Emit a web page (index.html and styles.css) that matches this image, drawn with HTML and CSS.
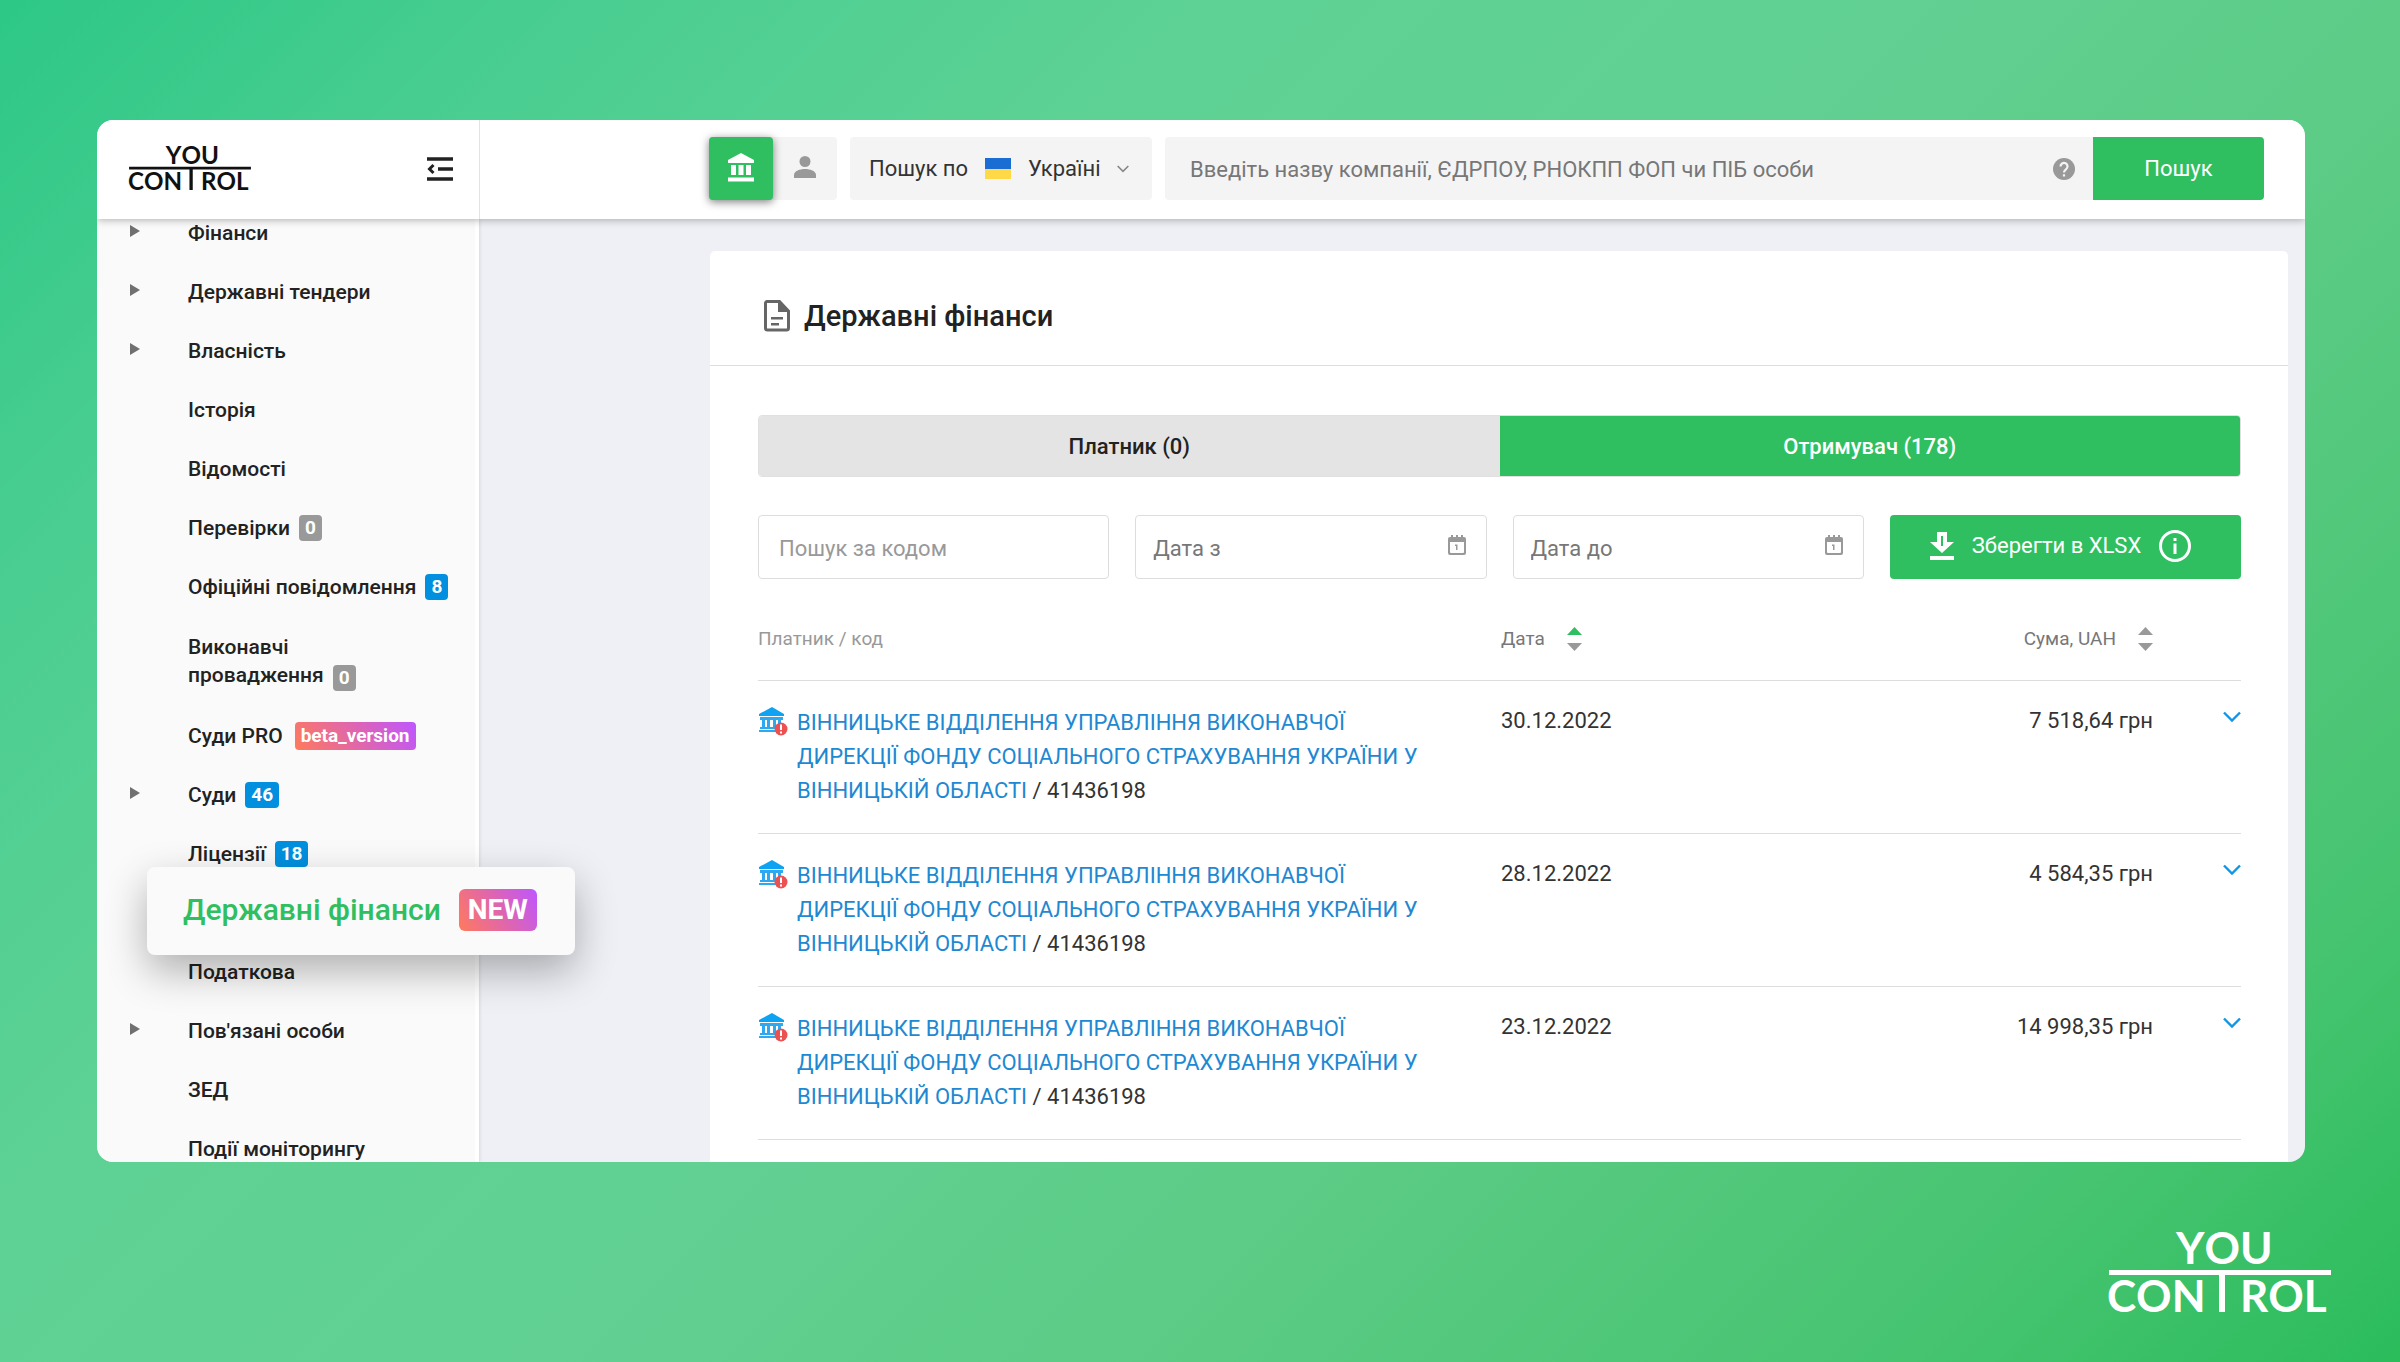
FILE: index.html
```html
<!DOCTYPE html>
<html lang="uk">
<head>
<meta charset="utf-8">
<title>Державні фінанси</title>
<link rel="stylesheet" href="styles.css">
</head>
<body>
<svg class="defs" aria-hidden="true">
  <symbol id="logo" viewBox="0 0 222 82" overflow="visible">
    <g class="logo-text" fill="currentColor">
      <text x="67" y="32">YOU</text>
      <text x="-2" y="80">CON</text>
      <text x="131" y="80">ROL</text>
    </g>
    <path d="M0 38h222v5H116v37h-6V43H0z" fill="currentColor"/>
  </symbol>
  <symbol id="calendar" viewBox="0 0 20 20">
    <path d="M3 2h1V0h2v2h3V0h2v2h3V0h2v2h1q2 0 2 2v14q0 2-2 2H3q-2 0-2-2V4q0-2 2-2zM3 7v10q0 1 1 1h12q1 0 1-1V7z" fill="currentColor" fill-rule="evenodd"/>
    <path d="M8 9.500h2.500V15H9v-4H8z" fill="currentColor"/>
  </symbol>
  <symbol id="bank-alert" viewBox="0 0 30 30">
    <path d="M14 1 26 8v2H1V8z" fill="#0ea2f2"/>
    <path d="M2 11h23v3H2zM4 14h3v7H4zM9 14h3v7H9zM15 14h3v7h-3zM20 14h3v7h-3zM2 21h18v2H2zM1 24h18v2H1z" fill="#2ea8ee"/>
    <circle cx="23" cy="23" r="6.500" fill="#ec5151"/>
    <path d="M22 18.500h2v5.500h-2zM22 25.500h2v2h-2z" fill="#fff"/>
  </symbol>
  <symbol id="chevron" viewBox="0 0 18 12">
    <path d="M1 1.500l8 8 8-8" fill="none" stroke="currentColor" stroke-width="2.400"/>
  </symbol>
</svg>

<div class="window">
  <header class="topbar">
    <div class="brand">
      <a class="brand-link" href="#" aria-label="YouControl"><svg class="brand-logo"><use href="#logo"/></svg></a>
      <button class="collapse" aria-label="Згорнути меню">
        <svg viewBox="0 0 26 24" width="26" height="24"><path d="M0 2h26M11 12h15M0 22h26" stroke="#222" stroke-width="3.500"/><path d="M6.500 8l-4 4 4 4" fill="none" stroke="#222" stroke-width="3"/></svg>
      </button>
    </div>
    <form class="search">
      <div class="kind">
        <button type="button" class="kind-btn active" aria-label="Компанії">
          <svg viewBox="0 0 26 30" width="26" height="30"><path d="M13 1 26 8v3H0V8zM3 13h5v10H3zM10.500 13h5v10h-5zM18 13h5v10h-5zM0 25.500h26v4H0z" fill="#fff"/></svg>
        </button>
        <button type="button" class="kind-btn" aria-label="Особи">
          <svg viewBox="0 0 22 22" width="22" height="22"><circle cx="11" cy="5.500" r="5.500" fill="#999"/><path d="M0 22v-3c0-4 6-6 11-6s11 2 11 6v3z" fill="#999"/></svg>
        </button>
      </div>
      <button type="button" class="region">
        <span>Пошук по</span>
        <svg viewBox="0 0 26 21" width="26" height="21"><path d="M0 0h26v11H0z" fill="#1a6dd3"/><path d="M0 11h26v10H0z" fill="#ffd948"/></svg>
        <span>Україні</span>
        <svg class="region-arrow"><use href="#chevron"/></svg>
      </button>
      <div class="query">
        <input class="query-input" type="text" aria-label="Пошук" placeholder="Введіть назву компанії, ЄДРПОУ, РНОКПП ФОП чи ПІБ особи">
        <span class="help"><svg viewBox="0 0 22 22" width="22" height="22"><circle cx="11" cy="11" r="11" fill="#999"/><path d="M7.500 8.500a3.500 3.500 0 1 1 5.500 2.800c-1.300 1-2 1.500-2 3.200" fill="none" stroke="#f4f4f4" stroke-width="2.200"/><path d="M9.900 16.300h2.200v2.200H9.900z" fill="#f4f4f4"/></svg></span>
        <button class="query-btn" type="button">Пошук</button>
      </div>
    </form>
  </header>

  <div class="body">
    <nav class="sidebar">
      <ul class="menu">
        <li class="item has-sub"><a href="#">Фінанси</a></li>
        <li class="item has-sub"><a href="#">Державні тендери</a></li>
        <li class="item has-sub"><a href="#">Власність</a></li>
        <li class="item"><a href="#">Історія</a></li>
        <li class="item"><a href="#">Відомості</a></li>
        <li class="item"><a href="#">Перевірки</a><span class="badge">0</span></li>
        <li class="item"><a href="#">Офіційні повідомлення</a><span class="badge blue">8</span></li>
        <li class="item two-line"><a href="#">Виконавчі<br>провадження</a><span class="badge">0</span></li>
        <li class="item"><a href="#">Суди PRO</a><span class="badge beta">beta_version</span></li>
        <li class="item has-sub"><a href="#">Суди</a><span class="badge blue">46</span></li>
        <li class="item"><a href="#">Ліцензії</a><span class="badge blue">18</span></li>
        <li class="item current"><a class="callout" href="#"><span>Державні фінанси</span><span class="new">NEW</span></a></li>
        <li class="item"><a href="#">Податкова</a></li>
        <li class="item has-sub"><a href="#">Пов'язані особи</a></li>
        <li class="item"><a href="#">ЗЕД</a></li>
        <li class="item"><a href="#">Події моніторингу</a></li>
      </ul>
    </nav>

    <main class="content">
      <section class="panel">
        <h1 class="panel-title">
          <svg viewBox="0 0 26 32" width="26" height="32"><path d="M3 1.500h12.500L24.500 11v17a2 2 0 0 1-2 2H3.500a2 2 0 0 1-2-2V3a1.500 1.500 0 0 1 1.500-1.500z" fill="none" stroke="#666" stroke-width="3"/><path d="M14 1h2l9 10v1H14zM7 17h12v2.500H7zM7 23h8v2.500H7z" fill="#666"/></svg>
          Державні фінанси
        </h1>
        <div class="panel-body">
          <div class="tabs">
            <button class="tab">Платник (0)</button>
            <button class="tab active">Отримувач (178)</button>
          </div>
          <div class="filters">
            <input class="field code" type="text" aria-label="Пошук за кодом" placeholder="Пошук за кодом">
            <div class="date"><input class="field" type="text" aria-label="Дата з" placeholder="Дата з"><svg class="cal"><use href="#calendar"/></svg></div>
            <div class="date"><input class="field" type="text" aria-label="Дата до" placeholder="Дата до"><svg class="cal"><use href="#calendar"/></svg></div>
            <button class="export">
              <svg viewBox="0 0 24 28" width="24" height="28"><path d="M7 0h10v10h7L12 21 0 10h7zM0 24h24v4H0z" fill="#fff"/><path d="M11 4h2v10h-2z" fill="#2fbf61"/></svg>
              <span>Зберегти в XLSX</span>
              <svg viewBox="0 0 32 32" width="32" height="32"><circle cx="16" cy="16" r="14.500" fill="none" stroke="#fff" stroke-width="3"/><path d="M14.500 8h3v3h-3zM14.500 13.500h3V24h-3z" fill="#fff"/></svg>
            </button>
          </div>
          <table class="payments">
            <colgroup><col class="c-payer"><col class="c-date"><col class="c-sum"><col class="c-more"></colgroup>
            <thead>
              <tr>
                <th class="payer-head">Платник / код</th>
                <th><span class="sort">Дата <svg viewBox="0 0 15 24" width="15" height="24"><path d="M7.500 0 15 8H0z" fill="#2fbf61"/><path d="M7.500 24 15 16H0z" fill="#999"/></svg></span></th>
                <th class="sum"><span class="sort">Сума, UAH <svg viewBox="0 0 15 24" width="15" height="24"><path d="M7.500 0 15 8H0z" fill="#999"/><path d="M7.500 24 15 16H0z" fill="#999"/></svg></span></th>
                <th></th>
              </tr>
            </thead>
            <tbody>
              <tr>
                <td><div class="payer"><svg class="payer-icon"><use href="#bank-alert"/></svg><p><a href="#">ВІННИЦЬКЕ ВІДДІЛЕННЯ УПРАВЛІННЯ ВИКОНАВЧОЇ ДИРЕКЦІЇ ФОНДУ СОЦІАЛЬНОГО СТРАХУВАННЯ УКРАЇНИ У ВІННИЦЬКІЙ ОБЛАСТІ</a> / 41436198</p></div></td>
                <td>30.12.2022</td>
                <td class="sum">7 518,64 грн</td>
                <td class="more"><button class="expand" aria-label="Детальніше"><svg class="arrow"><use href="#chevron"/></svg></button></td>
              </tr>
              <tr>
                <td><div class="payer"><svg class="payer-icon"><use href="#bank-alert"/></svg><p><a href="#">ВІННИЦЬКЕ ВІДДІЛЕННЯ УПРАВЛІННЯ ВИКОНАВЧОЇ ДИРЕКЦІЇ ФОНДУ СОЦІАЛЬНОГО СТРАХУВАННЯ УКРАЇНИ У ВІННИЦЬКІЙ ОБЛАСТІ</a> / 41436198</p></div></td>
                <td>28.12.2022</td>
                <td class="sum">4 584,35 грн</td>
                <td class="more"><button class="expand" aria-label="Детальніше"><svg class="arrow"><use href="#chevron"/></svg></button></td>
              </tr>
              <tr>
                <td><div class="payer"><svg class="payer-icon"><use href="#bank-alert"/></svg><p><a href="#">ВІННИЦЬКЕ ВІДДІЛЕННЯ УПРАВЛІННЯ ВИКОНАВЧОЇ ДИРЕКЦІЇ ФОНДУ СОЦІАЛЬНОГО СТРАХУВАННЯ УКРАЇНИ У ВІННИЦЬКІЙ ОБЛАСТІ</a> / 41436198</p></div></td>
                <td>23.12.2022</td>
                <td class="sum">14 998,35 грн</td>
                <td class="more"><button class="expand" aria-label="Детальніше"><svg class="arrow"><use href="#chevron"/></svg></button></td>
              </tr>
            </tbody>
          </table>
        </div>
      </section>
    </main>
  </div>
</div>
<footer class="page-foot"><svg class="foot-logo" role="img" aria-label="YouControl"><use href="#logo"/></svg></footer>
</body>
</html>
```
FILE: styles.css
```css
*, ::before { box-sizing: border-box; }

body {
  margin: 0;
  height: 100vh;
  padding: 120px 95px 0 97px;
  display: flex;
  flex-direction: column;
  overflow: hidden;
  font: 400 22px/34px Roboto, sans-serif;
  color: #333;
  background: linear-gradient(135deg, #2dc886 0%, #4bce91 16%, #5dd294 32%, #62d093 50%, #5bcb84 68%, #46c470 87%, #2bbc5c 100%);
}

button, input { font: inherit; color: inherit; border: 0; margin: 0; }
button { padding: 0; background: none; cursor: pointer; }
a { color: inherit; text-decoration: none; }
svg { display: block; flex: none; }
.defs { position: absolute; width: 0; height: 0; }
.logo-text { font: 700 44px Lato, sans-serif; font-kerning: none; }
.brand-logo, .foot-logo { overflow: visible; }

.window {
  flex: 1;
  min-height: 0;
  display: flex;
  flex-direction: column;
  overflow: hidden;
  border-radius: 16px;
  background: #eff0f6;
}

/* top bar */
.topbar {
  position: relative;
  z-index: 1;
  flex: none;
  height: 99px;
  display: flex;
  background: #fff;
  box-shadow: 0 1px 8px rgba(0, 0, 0, .3);
}
.brand {
  flex: none;
  width: 383px;
  display: flex;
  align-items: center;
  justify-content: space-between;
  padding: 0 26px 2px 32px;
  border-right: 1px solid #e4e4e4;
}
.brand-link { color: #111; }
.brand-logo { width: 122px; height: 45px; }
.search {
  flex: 1;
  display: flex;
  gap: 13px;
  padding: 17px 41px 19px 229px;
}
.kind { flex: none; display: flex; border-radius: 4px; background: #f4f4f4; }
.kind-btn {
  width: 64px;
  display: grid;
  place-items: center;
  padding-bottom: 4px;
  border-radius: 4px;
}
.kind-btn.active { background: #2fbf61; box-shadow: 0 2px 8px rgba(0, 0, 0, .5); }
.region {
  flex: none;
  width: 302px;
  display: flex;
  align-items: center;
  padding: 0 22px 0 19px;
  gap: 17px;
  border-radius: 4px;
  background: #f4f4f4;
  white-space: nowrap;
}
.region-arrow { width: 12px; height: 8px; color: #888; }
.query {
  flex: 1;
  display: flex;
  align-items: center;
  overflow: hidden;
  border-radius: 4px;
  background: #f4f4f4;
}
.query-input { flex: 1; height: 100%; padding: 2px 25px 0; background: none; }
.query-input::placeholder { color: #777; opacity: 1; }
.help { margin-right: 18px; }
.query-btn { width: 171px; height: 100%; background: #2fbf61; color: #fff; }

.body { flex: 1; min-height: 0; display: flex; }

/* side menu */
.sidebar {
  flex: none;
  width: 382px;
  background: #fafafa;
  border-right: 4px solid #fff;
  box-shadow: 0 0 4px rgba(0, 0, 0, .15);
}
.menu { list-style: none; margin: 0; padding: 0; }
.item {
  display: flex;
  align-items: center;
  height: 59px;
  padding-left: 91px;
  font-weight: 500;
  font-size: 21px;
  line-height: 28px;
  color: #222;
}
.item:first-child { height: 43px; padding-bottom: 16px; }
.has-sub { padding-left: 33px; }
.has-sub::before {
  content: "";
  width: 10px;
  margin: 0 48px 4px 0;
  border: solid transparent;
  border-width: 6px 0 6px 10px;
  border-left-color: #707070;
}
.two-line { height: 90px; }
.two-line .badge { align-self: flex-end; margin-bottom: 15px; }
.badge {
  margin-left: 9px;
  padding: 0 6px;
  border-radius: 4px;
  background: #999;
  color: #fff;
  font-weight: 700;
  font-size: 19px;
  line-height: 26px;
}
.badge.blue { background: #0090df; }
.badge.beta {
  margin-left: 12px;
  line-height: 28px;
  background: linear-gradient(60deg, #ff7a5c, #e066ac 50%, #be56ff);
}
.current { position: relative; padding: 0; }
.callout {
  position: absolute;
  left: 50px;
  top: -16px;
  z-index: 2;
  width: 428px;
  height: 88px;
  display: flex;
  align-items: center;
  gap: 18px;
  padding: 0 36px 3px;
  border-radius: 8px;
  background: #fafafa;
  box-shadow: 0 16px 40px rgba(0, 0, 0, .3);
  color: #2fbf61;
  font-size: 30px;
}
.new {
  padding: 0 9px;
  border-radius: 6px;
  background: linear-gradient(60deg, #ff7a5c, #e066ac 50%, #be56ff);
  color: #fff;
  font-weight: 700;
  font-size: 28px;
  line-height: 42px;
}

/* main panel */
.content { flex: 1; padding: 32px 17px 0 231px; }
.panel { background: #fff; border-radius: 5px; }
.panel-title {
  display: flex;
  align-items: center;
  gap: 14px;
  height: 115px;
  margin: 0;
  padding: 15px 54px 0;
  border-bottom: 1px solid #ddd;
  font-weight: 500;
  font-size: 29px;
  color: #222;
}
.panel-body { padding: 49px 47px 40px 48px; }
.tabs {
  display: flex;
  height: 62px;
  border: 1px solid #e0e0e0;
  border-radius: 4px;
  overflow: hidden;
}
.tab { flex: 1; padding-top: 2px; background: #e4e4e4; color: #222; font-weight: 500; }
.tab.active { background: #2fbf61; color: #fff; }
.filters {
  display: grid;
  grid-template-columns: repeat(4, 1fr);
  gap: 26px;
  margin-top: 38px;
}
.field {
  width: 100%;
  height: 64px;
  padding: 2px 17px 0;
  border: 1px solid #ddd;
  border-radius: 4px;
  background: #fff;
}
.field::placeholder { color: #777; opacity: 1; }
.field.code { padding-left: 20px; }
.field.code::placeholder { color: #999; }
.date { position: relative; }
.cal { position: absolute; right: 20px; top: 20px; width: 20px; height: 20px; color: #999; }
.export {
  display: flex;
  align-items: center;
  gap: 18px;
  padding: 0 0 3px 40px;
  border-radius: 4px;
  background: #2fbf61;
  color: #fff;
}

.payments { width: 100%; margin-top: 22px; border-collapse: collapse; table-layout: fixed; }
.c-payer { width: 743px; }
.c-sum { width: 420px; }
.c-more { width: 88px; }
.payments th {
  height: 79px;
  padding: 0 0 2px;
  border-bottom: 1px solid #ddd;
  font-weight: 400;
  font-size: 19px;
  text-align: left;
  color: #777;
}
.payments .payer-head { color: #999; }
.payments .sum { text-align: right; }
.sort { display: inline-flex; align-items: center; gap: 22px; }
.payments td { padding: 23px 0 25px; border-bottom: 1px solid #ddd; vertical-align: top; }
.payer { display: flex; gap: 9px; padding: 2px 60px 0 0; }
.payer-icon { width: 30px; height: 30px; }
.payer p { margin: 0; }
.payer a { color: #1e88d2; }
.expand { margin-left: auto; display: block; height: 26px; }
.arrow { width: 18px; height: 12px; color: #0f96e6; }

.page-foot { flex: none; height: 200px; display: flex; justify-content: flex-end; padding: 70px 0 0; }
.foot-logo { width: 222px; height: 82px; margin-right: -26px; color: #fff; }
```
